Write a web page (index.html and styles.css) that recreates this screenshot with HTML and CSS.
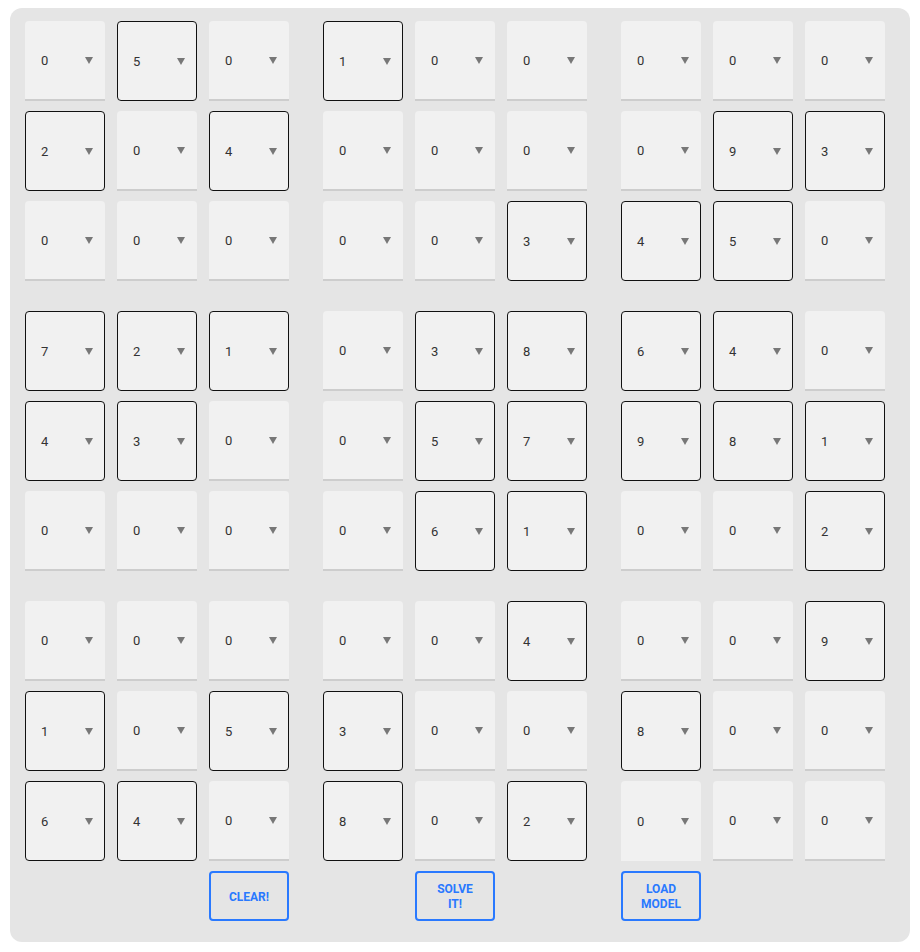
FILE: index.html
```html
<!DOCTYPE html>
<html lang="en">
<head>
  <meta charset="UTF-8" />
  <meta name="viewport" content="width=device-width, initial-scale=1" />
  <title>Sudoku Solver</title>
  <link rel="stylesheet" href="styles.css">
</head>
<body>

  <div class="panel">
    <div class="board">

      <div class="block">
        <div class="cell"><span>0</span><i class="arrow"></i></div>
        <div class="cell given"><span>5</span><i class="arrow"></i></div>
        <div class="cell"><span>0</span><i class="arrow"></i></div>
        <div class="cell given"><span>2</span><i class="arrow"></i></div>
        <div class="cell"><span>0</span><i class="arrow"></i></div>
        <div class="cell given"><span>4</span><i class="arrow"></i></div>
        <div class="cell"><span>0</span><i class="arrow"></i></div>
        <div class="cell"><span>0</span><i class="arrow"></i></div>
        <div class="cell"><span>0</span><i class="arrow"></i></div>
      </div>

      <div class="block">
        <div class="cell given"><span>1</span><i class="arrow"></i></div>
        <div class="cell"><span>0</span><i class="arrow"></i></div>
        <div class="cell"><span>0</span><i class="arrow"></i></div>
        <div class="cell"><span>0</span><i class="arrow"></i></div>
        <div class="cell"><span>0</span><i class="arrow"></i></div>
        <div class="cell"><span>0</span><i class="arrow"></i></div>
        <div class="cell"><span>0</span><i class="arrow"></i></div>
        <div class="cell"><span>0</span><i class="arrow"></i></div>
        <div class="cell given"><span>3</span><i class="arrow"></i></div>
      </div>

      <div class="block">
        <div class="cell"><span>0</span><i class="arrow"></i></div>
        <div class="cell"><span>0</span><i class="arrow"></i></div>
        <div class="cell"><span>0</span><i class="arrow"></i></div>
        <div class="cell"><span>0</span><i class="arrow"></i></div>
        <div class="cell given"><span>9</span><i class="arrow"></i></div>
        <div class="cell given"><span>3</span><i class="arrow"></i></div>
        <div class="cell given"><span>4</span><i class="arrow"></i></div>
        <div class="cell given"><span>5</span><i class="arrow"></i></div>
        <div class="cell"><span>0</span><i class="arrow"></i></div>
      </div>

      <div class="block">
        <div class="cell given"><span>7</span><i class="arrow"></i></div>
        <div class="cell given"><span>2</span><i class="arrow"></i></div>
        <div class="cell given"><span>1</span><i class="arrow"></i></div>
        <div class="cell given"><span>4</span><i class="arrow"></i></div>
        <div class="cell given"><span>3</span><i class="arrow"></i></div>
        <div class="cell"><span>0</span><i class="arrow"></i></div>
        <div class="cell"><span>0</span><i class="arrow"></i></div>
        <div class="cell"><span>0</span><i class="arrow"></i></div>
        <div class="cell"><span>0</span><i class="arrow"></i></div>
      </div>

      <div class="block">
        <div class="cell"><span>0</span><i class="arrow"></i></div>
        <div class="cell given"><span>3</span><i class="arrow"></i></div>
        <div class="cell given"><span>8</span><i class="arrow"></i></div>
        <div class="cell"><span>0</span><i class="arrow"></i></div>
        <div class="cell given"><span>5</span><i class="arrow"></i></div>
        <div class="cell given"><span>7</span><i class="arrow"></i></div>
        <div class="cell"><span>0</span><i class="arrow"></i></div>
        <div class="cell given"><span>6</span><i class="arrow"></i></div>
        <div class="cell given"><span>1</span><i class="arrow"></i></div>
      </div>

      <div class="block">
        <div class="cell given"><span>6</span><i class="arrow"></i></div>
        <div class="cell given"><span>4</span><i class="arrow"></i></div>
        <div class="cell"><span>0</span><i class="arrow"></i></div>
        <div class="cell given"><span>9</span><i class="arrow"></i></div>
        <div class="cell given"><span>8</span><i class="arrow"></i></div>
        <div class="cell given"><span>1</span><i class="arrow"></i></div>
        <div class="cell"><span>0</span><i class="arrow"></i></div>
        <div class="cell"><span>0</span><i class="arrow"></i></div>
        <div class="cell given"><span>2</span><i class="arrow"></i></div>
      </div>

      <div class="block">
        <div class="cell"><span>0</span><i class="arrow"></i></div>
        <div class="cell"><span>0</span><i class="arrow"></i></div>
        <div class="cell"><span>0</span><i class="arrow"></i></div>
        <div class="cell given"><span>1</span><i class="arrow"></i></div>
        <div class="cell"><span>0</span><i class="arrow"></i></div>
        <div class="cell given"><span>5</span><i class="arrow"></i></div>
        <div class="cell given"><span>6</span><i class="arrow"></i></div>
        <div class="cell given"><span>4</span><i class="arrow"></i></div>
        <div class="cell"><span>0</span><i class="arrow"></i></div>
      </div>

      <div class="block">
        <div class="cell"><span>0</span><i class="arrow"></i></div>
        <div class="cell"><span>0</span><i class="arrow"></i></div>
        <div class="cell given"><span>4</span><i class="arrow"></i></div>
        <div class="cell given"><span>3</span><i class="arrow"></i></div>
        <div class="cell"><span>0</span><i class="arrow"></i></div>
        <div class="cell"><span>0</span><i class="arrow"></i></div>
        <div class="cell given"><span>8</span><i class="arrow"></i></div>
        <div class="cell"><span>0</span><i class="arrow"></i></div>
        <div class="cell given"><span>2</span><i class="arrow"></i></div>
      </div>

      <div class="block">
        <div class="cell"><span>0</span><i class="arrow"></i></div>
        <div class="cell"><span>0</span><i class="arrow"></i></div>
        <div class="cell given"><span>9</span><i class="arrow"></i></div>
        <div class="cell given"><span>8</span><i class="arrow"></i></div>
        <div class="cell"><span>0</span><i class="arrow"></i></div>
        <div class="cell"><span>0</span><i class="arrow"></i></div>
        <div class="cell focused"><span>0</span><i class="arrow"></i></div>
        <div class="cell"><span>0</span><i class="arrow"></i></div>
        <div class="cell"><span>0</span><i class="arrow"></i></div>
      </div>

    </div>

    <div class="actions">
      <button class="btn">CLEAR!</button>
      <button class="btn">SOLVE IT!</button>
      <button class="btn">LOAD MODEL</button>
    </div>
  </div>

</body>
</html>
```

FILE: styles.css
```css
* {
  box-sizing: border-box;
}

body {
  margin: 8px 10px;
  font-family: Roboto, 'Liberation Sans', sans-serif;
  background: #fff;
  color: #333;
}

.panel {
  width: 900px;
  background: #e5e5e5;
  border-radius: 12px;
  padding: 13px 25px 21px 15px;
}

.board {
  display: grid;
  grid-template-columns: repeat(3, 264px);
  column-gap: 34px;
  row-gap: 30px;
}

.block {
  display: grid;
  grid-template-columns: repeat(3, 80px);
  grid-auto-rows: 80px;
  column-gap: 12px;
  row-gap: 10px;
}

.cell {
  display: flex;
  align-items: center;
  justify-content: space-between;
  padding: 0 12px 0 16px;
  background: #f1f1f1;
  border-radius: 4px 4px 0 0;
  border-bottom: 2px solid #cdcdcd;
  font-size: 13px;
  color: #333;
}

.cell.given {
  border: 1px solid #111;
  border-radius: 4px;
  padding: 0 11px 0 15px;
}

.cell.focused {
  border: 1px solid transparent;
  padding: 0 11px 0 15px;
}

.arrow {
  width: 0;
  height: 0;
  border-left: 4.5px solid transparent;
  border-right: 4.5px solid transparent;
  border-top: 7px solid #777;
}

.actions {
  display: flex;
  gap: 126px;
  margin-top: 10px;
  padding-left: 184px;
}

.btn {
  width: 80px;
  height: 50px;
  padding: 2px 14px 0;
  background: transparent;
  border: 2px solid #2979ff;
  border-radius: 4px;
  color: #2979ff;
  font-family: Roboto, 'Liberation Sans', sans-serif;
  font-weight: bold;
  font-size: 12px;
  line-height: 15px;
  cursor: pointer;
}
```
